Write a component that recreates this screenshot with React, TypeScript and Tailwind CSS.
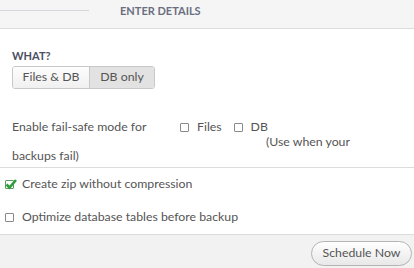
const Checkbox = ({ checked = false }: { checked?: boolean }) => (
  <span
    className={
      checked
        ? "relative inline-block w-[9px] h-[9px] border border-[#5a9a5e] rounded-[1px] bg-white shrink-0"
        : "relative inline-block w-[9px] h-[9px] border border-[#8a8a8a] rounded-[1px] bg-white shrink-0"
    }
  >
    {checked && (
      <svg
        viewBox="0 0 12 12"
        className="absolute -left-[1px] -top-[3px] w-[12px] h-[12px]"
      >
        <path d="M1.5 6.5 L4.5 9.5 L11 2" stroke="#2e9e3a" strokeWidth="2.6" fill="none" />
      </svg>
    )}
  </span>
);

const App = () => {
  return (
    <main className="w-[414px] h-[268px] bg-white text-[#555] text-[12.3px] font-['Lato','Open_Sans',sans-serif] overflow-hidden flex flex-col">
      <header className="h-[29px] bg-[#f5f5f5] border-b border-[#dcdcdc] flex items-start shrink-0">
        <div className="w-[89px] h-px bg-[#d6d6de] mt-[10px]" />
        <h1 className="ml-[31px] mt-[3px] text-[11px] font-bold text-[#6b6e7e]">
          ENTER DETAILS
        </h1>
      </header>

      <section className="px-[12px] pt-[20px]">
        <h2 className="text-[11px] font-bold text-[#4a5060] leading-[14px]">WHAT?</h2>
        <div className="mt-[3px] flex w-[143px] h-[23px] border border-[#c8c8c8] rounded-[3px] overflow-hidden">
          <button className="w-[77px] bg-gradient-to-b from-[#fdfdfd] to-[#f0f0f0] border-r border-[#c8c8c8] text-[#555]">
            Files &amp; DB
          </button>
          <button className="flex-1 bg-[#e2e2e2] text-[#555]">DB only</button>
        </div>
      </section>

      <section className="px-[12px] pt-[30px] pb-[3px] border-b border-[#dcdcdc]">
        <div className="flex items-center h-[16px]">
          <span className="w-[168px]">Enable fail-safe mode for</span>
          <Checkbox />
          <span className="ml-[8px]">Files</span>
          <span className="ml-[12px] flex items-center">
            <Checkbox />
          </span>
          <span className="ml-[8px]">DB</span>
        </div>
        <div className="h-[13px] leading-[13px] pl-[254px]">(Use when your</div>
        <div className="h-[16px] leading-[16px]">backups fail)</div>
      </section>

      <section className="pl-[5px] border-b border-[#dcdcdc] flex flex-col">
        <label className="flex items-center gap-[8px] h-[32px]">
          <Checkbox checked />
          <span>Create zip without compression</span>
        </label>
        <label className="flex items-center gap-[8px] h-[34px]">
          <Checkbox />
          <span>Optimize database tables before backup</span>
        </label>
      </section>

      <footer className="flex-1 bg-[#f2f2f2] flex justify-end items-end pb-[2px] pr-[2px]">
        <button className="w-[101px] h-[25px] rounded-full border border-[#b4b4b4] bg-gradient-to-b from-white to-[#e8e8e8] text-[#555]">
          Schedule Now
        </button>
      </footer>
    </main>
  );
};

export default App;
